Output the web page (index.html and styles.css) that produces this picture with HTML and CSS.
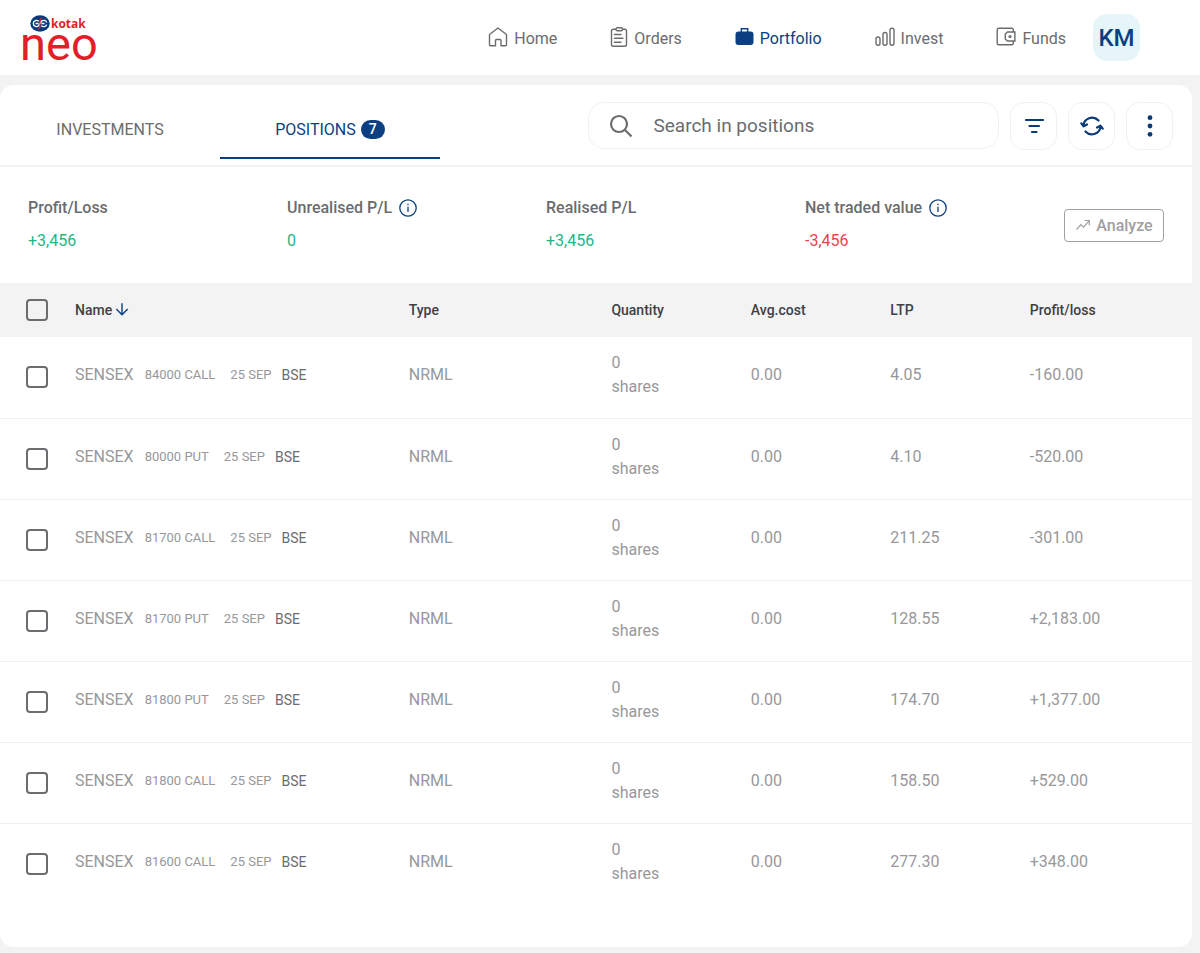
FILE: index.html
```
<!DOCTYPE html>
<html lang="en">
<head>
    <meta charset="UTF-8">
    <meta name="viewport" content="width=device-width, initial-scale=1.0">
    <title>Positions - Kotak Neo</title>
    <link rel="stylesheet" href="styles.css">
</head>
<body>
    <!-- Top bar -->
    <header class="topbar">
        <a class="logo" href="#">
            <span class="logo-top">
                <svg width="20" height="17" viewBox="0 0 20 17">
                    <ellipse cx="10" cy="8.5" rx="9.7" ry="8.2" fill="#0a3a7c"/>
                    <path d="M8.7 6.3C7 4.700 3.300 5.200 3.300 8.500s3.700 3.800 5.400 2.200L11.300 6.300C13 4.700 16.300 5.200 16.600 7.500M11.300 10.700c1.700 1.600 5 1.100 5.300-1.200M5.500 8.500h3M11.500 8.500h3" fill="none" stroke="#fff" stroke-width="1.4"/>
                    <path d="M12.200 3C9.700 3 10 6 10 8.500s.3 5.500-2.200 5.500" fill="none" stroke="#e31e26" stroke-width="1.1"/>
                </svg>
                <span class="logo-kotak">kotak</span>
            </span>
            <span class="logo-neo">neo</span>
        </a>
        <nav class="main-nav">
            <a class="nav-link" href="#">
                <svg width="20" height="20" viewBox="0 0 20 20" fill="none" stroke="currentColor" stroke-width="1.4" stroke-linejoin="round">
                    <path d="M1.500 7.500 10 1l8.500 6.500v10.300a1 1 0 0 1-1 1H13v-5.300a1 1 0 0 0-1-1H8.500a1 1 0 0 0-1 1v5.300h-5a1 1 0 0 1-1-1z"/>
                </svg>
                Home
            </a>
            <a class="nav-link" href="#">
                <svg width="18" height="20" viewBox="0 0 18 20" fill="none" stroke="currentColor" stroke-width="1.4" stroke-linecap="round">
                    <rect x="1.5" y="2.3" width="15" height="17" rx="1.8"/>
                    <rect x="6" y=".8" width="6.5" height="3" rx="1.3" fill="#fff"/>
                    <path d="M4.500 7.500H11M4.500 11.300H13M4.500 15.300H11"/>
                </svg>
                Orders
            </a>
            <a class="nav-link active" href="#">
                <svg width="19" height="20" viewBox="0 0 19 20">
                    <path d="M6.300 5V1.700h6.400V5" fill="none" stroke="currentColor" stroke-width="1.4"/>
                    <rect x=".5" y="4.5" width="18" height="13.5" rx="3" fill="currentColor"/>
                </svg>
                Portfolio
            </a>
            <a class="nav-link" href="#">
                <svg width="20" height="20" viewBox="0 0 20 20" fill="none" stroke="currentColor" stroke-width="1.4">
                    <rect x="1" y="10" width="4" height="8.300" rx="2"/>
                    <rect x="8" y="5.5" width="4" height="12.8" rx="2"/>
                    <rect x="15" y="1.2" width="4" height="17.1" rx="2"/>
                </svg>
                Invest
            </a>
            <a class="nav-link" href="#">
                <svg width="20" height="20" viewBox="0 0 20 20" fill="none" stroke="currentColor" stroke-width="1.4">
                    <path d="M17.300 5V2.700a1.500 1.500 0 0 0-1.500-1.500H2.700a1.500 1.500 0 0 0-1.500 1.500v13.600a1.500 1.500 0 0 0 1.500 1.500h13.100a1.500 1.500 0 0 0 1.500-1.500V14"/>
                    <path d="M18.900 5h-7.400L9.300 7v5l2.200 2h7.400z"/>
                    <circle cx="14" cy="9.500" r="1.600" fill="currentColor" stroke="none"/>
                </svg>
                Funds
            </a>
        </nav>
        <button class="avatar" type="button">KM</button>
    </header>

    <main class="card">
        <!-- Tabs and search -->
        <div class="toolbar">
            <div class="tabs">
                <button class="tab" type="button">INVESTMENTS</button>
                <button class="tab active" type="button">POSITIONS <span class="count">7</span></button>
            </div>
            <label class="search">
                <svg width="24" height="24" viewBox="0 0 24 24" fill="none" stroke="currentColor" stroke-width="2.200">
                    <circle cx="10" cy="10" r="8"/>
                    <path d="m15.800 15.800 6.700 6.700"/>
                </svg>
                <input type="text" placeholder="Search in positions" aria-label="Search in positions">
            </label>
            <button class="icon-btn" type="button" aria-label="Filter">
                <svg width="24" height="24" viewBox="0 0 24 24" fill="none" stroke="currentColor" stroke-width="2.200" stroke-linecap="round">
                    <path d="M4 6h17M7.500 12H17M10 18h4.500"/>
                </svg>
            </button>
            <button class="icon-btn" type="button" aria-label="Refresh">
                <svg width="24" height="24" viewBox="0 0 24 24" fill="none" stroke="currentColor" stroke-width="2.200" stroke-linecap="round" stroke-linejoin="round">
                    <path d="M18.500 6.500A8.700 8.700 0 0 0 3.400 12M1.300 9.300l2.300 3L7 10.500"/>
                    <path d="M5.500 17.500A8.700 8.700 0 0 0 20.600 12M22.700 14.700l-2.300-3L17 13.500"/>
                </svg>
            </button>
            <button class="icon-btn" type="button" aria-label="More options">
                <svg width="24" height="24" viewBox="0 0 24 24" fill="currentColor">
                    <circle cx="12" cy="3.700" r="2.400"/>
                    <circle cx="12" cy="12" r="2.400"/>
                    <circle cx="12" cy="20.300" r="2.400"/>
                </svg>
            </button>
        </div>

        <!-- Summary -->
        <section class="summary">
            <div class="stat">
                <div class="stat-label">Profit/Loss</div>
                <div class="stat-value gain">+3,456</div>
            </div>
            <div class="stat">
                <div class="stat-label">Unrealised P/L
                    <svg width="18" height="18" viewBox="0 0 18 18" fill="none" stroke="#0b3f82" stroke-width="1.300">
                        <circle cx="9" cy="9" r="8.200"/>
                        <path d="M9 7.700v5.300M9 4.800v1.500"/>
                    </svg>
                </div>
                <div class="stat-value gain">0</div>
            </div>
            <div class="stat">
                <div class="stat-label">Realised P/L</div>
                <div class="stat-value gain">+3,456</div>
            </div>
            <div class="stat">
                <div class="stat-label">Net traded value
                    <svg width="18" height="18" viewBox="0 0 18 18" fill="none" stroke="#0b3f82" stroke-width="1.300">
                        <circle cx="9" cy="9" r="8.200"/>
                        <path d="M9 7.700v5.300M9 4.800v1.500"/>
                    </svg>
                </div>
                <div class="stat-value loss">-3,456</div>
            </div>
            <button class="analyze" type="button">
                <svg width="16" height="16" viewBox="0 0 16 16" fill="none" stroke="currentColor" stroke-width="1.200">
                    <path d="m1.500 12.500 4.300-4.800 2.900 2.500L14 3.800M9.500 3.500h4.800v4.800"/>
                </svg>
                Analyze
            </button>
        </section>

        <!-- Positions -->
        <table class="positions">
            <colgroup>
                <col class="col-check">
                <col class="col-name">
                <col class="col-type">
                <col class="col-num">
                <col class="col-num">
                <col class="col-num">
                <col>
            </colgroup>
            <thead>
                <tr>
                    <th class="check"><input type="checkbox" aria-label="Select all"></th>
                    <th>
                        <span class="sort">Name
                            <svg width="14" height="14" viewBox="0 0 14 14" fill="none" stroke="#0b3f82" stroke-width="1.400">
                                <path d="M7 .3v11.500M1.300 6 7 11.700 12.700 6"/>
                            </svg>
                        </span>
                    </th>
                    <th>Type</th>
                    <th>Quantity</th>
                    <th>Avg.cost</th>
                    <th>LTP</th>
                    <th>Profit/loss</th>
                </tr>
            </thead>
            <tbody>
                <tr>
                    <td class="check"><input type="checkbox" aria-label="Select SENSEX 84000 CALL"></td>
                    <td><div class="name">SENSEX <span class="strike">84000 CALL</span> <span class="expiry">25 SEP</span> <span class="exchange">BSE</span></div></td>
                    <td>NRML</td>
                    <td>0<br>shares</td>
                    <td>0.00</td>
                    <td>4.05</td>
                    <td>-160.00</td>
                </tr>
                <tr>
                    <td class="check"><input type="checkbox" aria-label="Select SENSEX 80000 PUT"></td>
                    <td><div class="name">SENSEX <span class="strike">80000 PUT</span> <span class="expiry">25 SEP</span> <span class="exchange">BSE</span></div></td>
                    <td>NRML</td>
                    <td>0<br>shares</td>
                    <td>0.00</td>
                    <td>4.10</td>
                    <td>-520.00</td>
                </tr>
                <tr>
                    <td class="check"><input type="checkbox" aria-label="Select SENSEX 81700 CALL"></td>
                    <td><div class="name">SENSEX <span class="strike">81700 CALL</span> <span class="expiry">25 SEP</span> <span class="exchange">BSE</span></div></td>
                    <td>NRML</td>
                    <td>0<br>shares</td>
                    <td>0.00</td>
                    <td>211.25</td>
                    <td>-301.00</td>
                </tr>
                <tr>
                    <td class="check"><input type="checkbox" aria-label="Select SENSEX 81700 PUT"></td>
                    <td><div class="name">SENSEX <span class="strike">81700 PUT</span> <span class="expiry">25 SEP</span> <span class="exchange">BSE</span></div></td>
                    <td>NRML</td>
                    <td>0<br>shares</td>
                    <td>0.00</td>
                    <td>128.55</td>
                    <td>+2,183.00</td>
                </tr>
                <tr>
                    <td class="check"><input type="checkbox" aria-label="Select SENSEX 81800 PUT"></td>
                    <td><div class="name">SENSEX <span class="strike">81800 PUT</span> <span class="expiry">25 SEP</span> <span class="exchange">BSE</span></div></td>
                    <td>NRML</td>
                    <td>0<br>shares</td>
                    <td>0.00</td>
                    <td>174.70</td>
                    <td>+1,377.00</td>
                </tr>
                <tr>
                    <td class="check"><input type="checkbox" aria-label="Select SENSEX 81800 CALL"></td>
                    <td><div class="name">SENSEX <span class="strike">81800 CALL</span> <span class="expiry">25 SEP</span> <span class="exchange">BSE</span></div></td>
                    <td>NRML</td>
                    <td>0<br>shares</td>
                    <td>0.00</td>
                    <td>158.50</td>
                    <td>+529.00</td>
                </tr>
                <tr>
                    <td class="check"><input type="checkbox" aria-label="Select SENSEX 81600 CALL"></td>
                    <td><div class="name">SENSEX <span class="strike">81600 CALL</span> <span class="expiry">25 SEP</span> <span class="exchange">BSE</span></div></td>
                    <td>NRML</td>
                    <td>0<br>shares</td>
                    <td>0.00</td>
                    <td>277.30</td>
                    <td>+348.00</td>
                </tr>
            </tbody>
        </table>
    </main>
</body>
</html>
```
FILE: styles.css
```
* {
    box-sizing: border-box;
}
body {
    margin: 0;
    font-family: Roboto, Arial, sans-serif;
    font-size: 16px;
    background-color: #f3f3f3;
    color: #6b6c6f;
}
button {
    font-family: inherit;
    background: none;
    border: none;
    padding: 0;
    color: inherit;
    cursor: pointer;
}
a {
    color: inherit;
    text-decoration: none;
}

/* Top bar */
.topbar {
    display: flex;
    align-items: center;
    height: 75px;
    padding: 0 60px 0 20px;
    background-color: #fff;
}
.logo {
    display: flex;
    flex-direction: column;
    padding-bottom: 4px;
    color: #e31e26;
}
.logo-top {
    display: flex;
    align-items: center;
    gap: 1px;
    height: 17px;
    padding-left: 10px;
}
.logo-kotak {
    font-family: "Open Sans", sans-serif;
    font-size: 12px;
    font-weight: 700;
    line-height: 12px;
}
.logo-neo {
    font-size: 47px;
    line-height: 24px;
}
.main-nav {
    display: flex;
    gap: 53px;
    margin-left: auto;
    margin-right: 27px;
    padding-top: 3px;
}
.nav-link {
    display: flex;
    align-items: flex-start;
    gap: 6px;
    line-height: 24px;
}
.nav-link.active {
    color: #0b3f82;
}
.avatar {
    width: 47px;
    height: 47px;
    border-radius: 14px;
    background-color: #e6f6f8;
    color: #0b3f82;
    font-size: 24px;
    font-weight: 500;
}

/* Card */
.card {
    margin: 10px 8px 6px 0;
    padding-bottom: 43px;
    background-color: #fff;
    border-radius: 14px;
}
.toolbar {
    display: flex;
    align-items: center;
    gap: 11px;
    height: 82px;
    padding: 1px 19px 0 0;
    border-bottom: 2px solid #f3f3f3;
}
.tabs {
    display: flex;
    align-self: stretch;
    margin-right: auto;
}
.tab {
    display: flex;
    align-items: center;
    justify-content: center;
    gap: 5px;
    width: 220px;
    height: 73px;
    padding-top: 16px;
    border-bottom: 2px solid transparent;
    font-size: 16px;
}
.tab.active {
    color: #0b3f82;
    border-bottom-color: #0b3f82;
}
.count {
    padding: 0 8px;
    border-radius: 10px;
    background-color: #0b3f82;
    color: #fff;
    font-size: 14px;
    font-weight: 500;
    line-height: 19px;
}
.search {
    display: flex;
    align-items: center;
    gap: 20px;
    width: 35%;
    height: 47px;
    padding: 0 20px;
    border: 1px solid #eff2f4;
    border-radius: 16px;
}
.search svg {
    flex-shrink: 0;
}
.search input {
    flex: 1;
    min-width: 0;
    border: none;
    outline: none;
    padding: 0;
    font-family: inherit;
    font-size: 19px;
    color: inherit;
}
.search input::placeholder {
    color: #6b6c6f;
    opacity: 1;
}
.icon-btn {
    display: flex;
    align-items: center;
    justify-content: center;
    width: 47px;
    height: 48px;
    border: 1px solid #eff2f4;
    border-radius: 14px;
    color: #0b3a75;
}

/* Summary */
.summary {
    display: grid;
    grid-template-columns: repeat(4, 1fr) 100px;
    align-items: center;
    height: 116px;
    padding: 0 28px;
}
.stat {
    padding-bottom: 2px;
}
.stat-label {
    display: flex;
    align-items: center;
    gap: 7px;
    margin-bottom: 9px;
    font-weight: 500;
    line-height: 24px;
}
.stat-value {
    line-height: 24px;
}
.gain {
    color: #1fb587;
}
.loss {
    color: #e8434f;
}
.analyze {
    display: flex;
    align-items: center;
    justify-content: center;
    gap: 5px;
    height: 33px;
    border: 1px solid #a0a0a2;
    border-radius: 4px;
    color: #a0a0a2;
    font-size: 16px;
    font-weight: 500;
}

/* Positions table */
.positions {
    width: 100%;
    table-layout: fixed;
    border-collapse: collapse;
}
.col-check {
    width: 75px;
}
.col-name {
    width: 28%;
}
.col-type {
    width: 17%;
}
.col-num {
    width: 11.7%;
}
.positions th {
    height: 54px;
    padding: 0;
    background-color: #f3f3f3;
    color: #3f4045;
    font-size: 14px;
    font-weight: 500;
    text-align: left;
}
.positions td {
    height: 81px;
    padding: 0 0 4px;
    border-bottom: 1px solid #f0f0f0;
    color: #97989b;
    line-height: 24px;
}
.positions tbody tr:last-child td {
    border-bottom: none;
}
.positions .check {
    padding: 0 0 0 26px;
}
.positions input {
    display: block;
    appearance: none;
    width: 22px;
    height: 22px;
    margin: 0;
    border: 2px solid #6b6c6f;
    border-radius: 4px;
    background-color: #fff;
}
.positions th input {
    background-color: transparent;
}
.positions input:checked {
    background-color: #0b3f82;
}
.sort {
    display: flex;
    align-items: center;
    gap: 3px;
}
.name {
    display: flex;
    align-items: center;
    white-space: nowrap;
}
.strike,
.expiry {
    font-size: 13px;
}
.strike {
    margin: 0 15px 0 11px;
}
.exchange {
    margin-left: 10px;
    color: #6b6c6f;
    font-size: 14px;
}
```
